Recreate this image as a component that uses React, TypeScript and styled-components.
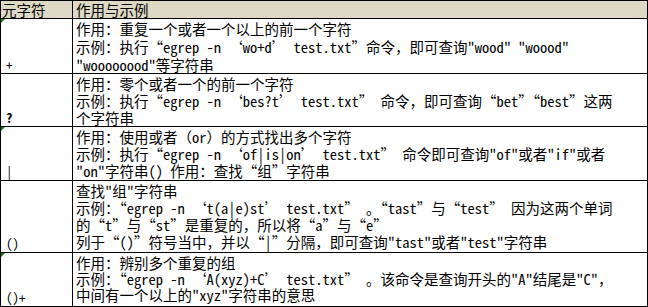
import React from 'react';
import styled, { createGlobalStyle } from 'styled-components';

const GlobalStyle = createGlobalStyle`
  html, body {
    margin: 0;
    padding: 0;
    background: #ffffff;
  }

  body {
    font-family: "Noto Sans Mono CJK SC", "Noto Sans CJK SC", "Liberation Mono", monospace;
    color: #000000;
  }
`

type Row = {
  sym: string;
  bold?: boolean;
  flag?: boolean;
  height: number;
  step: number;
  lines: string[];
};

const rows: Row[] = [
  {
    sym: '+',
    flag: true,
    height: 54,
    step: 18,
    lines: [
      '作用：重复一个或者一个以上的前一个字符',
      '示例：执行“egrep -n ‘wo+d’ test.txt”命令，即可查询"wood" "woood"',
      '"woooooood"等字符串',
    ],
  },
  {
    sym: '?',
    bold: true,
    height: 52,
    step: 17,
    lines: [
      '作用：零个或者一个的前一个字符',
      '示例：执行“egrep -n ‘bes?t’ test.txt” 命令，即可查询“bet”“best”这两',
      '个字符串',
    ],
  },
  {
    sym: '|',
    flag: true,
    height: 53,
    step: 17,
    lines: [
      '作用：使用或者（or）的方式找出多个字符',
      '示例：执行“egrep -n ‘of|is|on’ test.txt” 命令即可查询"of"或者"if"或者',
      '"on"字符串() 作用：查找“组”字符串',
    ],
  },
  {
    sym: '()',
    height: 71,
    step: 17,
    lines: [
      '查找"组"字符串',
      '示例：“egrep -n ‘t(a|e)st’ test.txt” 。“tast”与“test” 因为这两个单词',
      '的“t”与“st”是重复的，所以将“a”与“e”',
      '列于“()”符号当中，并以“|”分隔，即可查询"tast"或者"test"字符串',
    ],
  },
  {
    sym: '()+',
    flag: true,
    height: 53,
    step: 16,
    lines: [
      '作用：辨别多个重复的组',
      '示例：“egrep -n ‘A(xyz)+C’ test.txt” 。该命令是查询开头的"A"结尾是"C"，',
      '中间有一个以上的"xyz"字符串的意思',
    ],
  },
];

export default function App() {
  return (
    <>
      <GlobalStyle />
      <Sheet>
        <colgroup>
          <col style={{ width: 72 }} />
          <col />
        </colgroup>
        <thead>
          <tr>
            <HeadCell>元字符</HeadCell>
            <HeadCell $wide>作用与示例</HeadCell>
          </tr>
        </thead>
        <tbody>
          {rows.map((r) => (
            <tr key={r.sym}>
              <SymCell>
                <SymBox $height={r.height}>
                  {r.flag && <Flag />}
                  <Sym $bold={r.bold}>{r.sym}</Sym>
                </SymBox>
              </SymCell>
              <TextCell>
                <TextBox $height={r.height}>
                  {r.lines.map((l, i) => (
                    <Line key={i} $step={r.step}>
                      {l}
                    </Line>
                  ))}
                </TextBox>
              </TextCell>
            </tr>
          ))}
        </tbody>
      </Sheet>
    </>
  );
}

const Sheet = styled.table`
  width: 648px;
  border-collapse: collapse;
  table-layout: fixed;
  font-size: 14.5px;
  line-height: 17px;
`

const HeadCell = styled.th<{ $wide?: boolean }>`
  height: 17px;
  border: 1px solid #000000;
  background: #ddd9c4;
  padding: 0 0 0 ${({ $wide }) => ($wide ? '3px' : '1px')};
  text-align: left;
  font-weight: normal;
  vertical-align: middle;
  white-space: nowrap;
  overflow: hidden;
`

const SymCell = styled.td`
  border: 1px solid #000000;
  padding: 0;
  vertical-align: top;
`

const SymBox = styled.div<{ $height: number }>`
  position: relative;
  height: ${({ $height }) => $height}px;
  display: flex;
  align-items: flex-end;
  padding-left: 5px;
  overflow: hidden;
`

// little green corner marker, as the spreadsheet shows on some cells
const Flag = styled.span`
  position: absolute;
  top: 0;
  left: 0;
  width: 0;
  height: 0;
  border-top: 4px solid #008000;
  border-right: 4px solid transparent;
`

const Sym = styled.span<{ $bold?: boolean }>`
  font-size: 13px;
  line-height: 17px;
  font-weight: ${({ $bold }) => ($bold ? 'bold' : 'normal')};
`

const TextCell = styled.td`
  border: 1px solid #000000;
  padding: 0;
  vertical-align: top;
`

const TextBox = styled.div<{ $height: number }>`
  height: ${({ $height }) => $height}px;
  padding: 1px 0 0 3px;
  box-sizing: border-box;
  white-space: pre;
  overflow: hidden;
`

const Line = styled.div<{ $step: number }>`
  height: ${({ $step }) => $step}px;
  line-height: 17px;
`
